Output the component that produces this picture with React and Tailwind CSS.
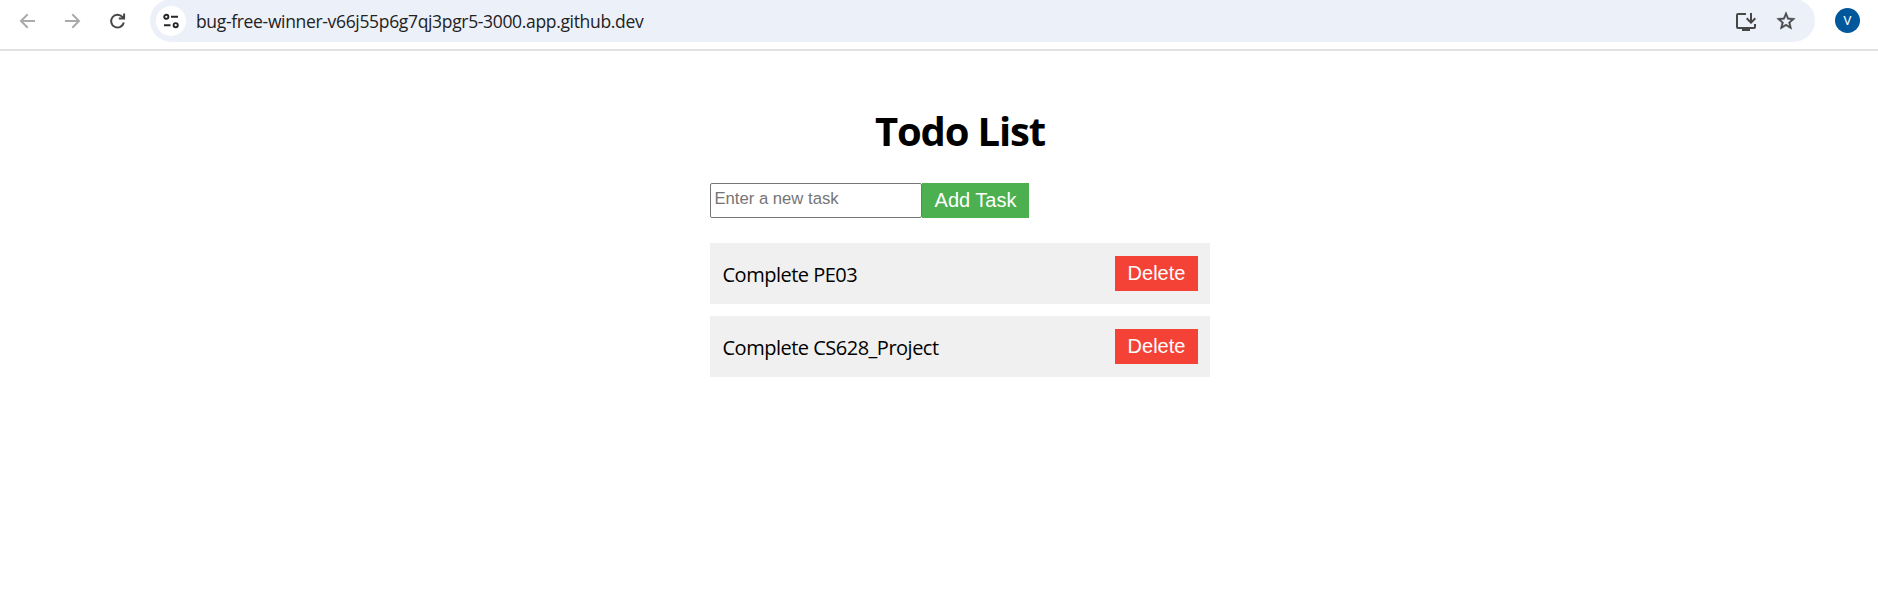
const TASKS = ["Complete PE03", "Complete CS628_Project"];

function Toolbar() {
  return (
    <header className="flex h-[51px] items-start border-b-2 border-[#e1e1e1] bg-white">
      <div className="flex h-[41px] w-[150px] shrink-0 items-center text-[#ababab]">
        <svg className="ml-[19px] size-[18px]" viewBox="0 0 18 18" fill="none" stroke="currentColor" strokeWidth="2">
          <path d="M16 9H2.5M8.7 2.3 2 9l6.700 6.700" />
        </svg>
        <svg className="ml-[27px] size-[18px]" viewBox="0 0 18 18" fill="none" stroke="currentColor" strokeWidth="2">
          <path d="M1 9h13.5M8.3 2.3 15 9l-6.700 6.700" />
        </svg>
        <svg className="ml-[27px] size-[18px]" viewBox="0 0 18 18" fill="none" stroke="#474747" strokeWidth="2">
          <path d="M14.800 10.500A6.400 6.400 0 1 1 13.400 4.900L15 6.200M15.100 1.500V6.600H9.800" />
        </svg>
      </div>
      <div className="-mt-px flex h-[43px] w-[1665px] shrink-0 items-center rounded-full bg-[#ecf0f9] pl-[6px] pr-[18px]">
        <span className="flex size-[30px] items-center justify-center rounded-full bg-white">
          <svg className="size-4" viewBox="0 0 16 16" fill="none" stroke="#262626" strokeWidth="1.9">
            <circle cx="3.3" cy="3.8" r="2.1" />
            <path d="M8 3.8h7M1 12.2h6.5" />
            <circle cx="12.7" cy="12.2" r="2.1" />
          </svg>
        </span>
        <span className="ml-[10px] whitespace-nowrap font-['Open_Sans',sans-serif] text-[17.5px] leading-6 tracking-[-0.335px] text-[#222]">
          bug-free-winner-v66j55p6g7qj3pgr5-3000.app.github.dev
        </span>
        <svg className="ml-auto mt-[2px] size-6" viewBox="0 0 24 24" fill="#474747">
          <path d="M20 17H4V5h8V3H4a2 2 0 0 0-2 2v12a2 2 0 0 0 2 2h4v2h8v-2h4a2 2 0 0 0 2-2v-3h-2z" />
          <path d="m17 14 5-5-1.410-1.410L18 10.170V3h-2v7.170l-2.590-2.580L12 9z" />
        </svg>
        <svg className="ml-[17px] mt-px size-[22px]" viewBox="0 0 24 24" fill="#474747" stroke="#474747" strokeWidth="0.5">
          <path d="m22 9.240-7.190-.620L12 2 9.190 8.630 2 9.240l5.460 4.730L5.820 21 12 17.270 18.180 21l-1.630-7.030zM12 15.400l-3.760 2.270 1-4.280-3.320-2.880 4.380-.380L12 6.100l1.710 4.040 4.380.380-3.320 2.880 1 4.280z" />
        </svg>
      </div>
      <span className="ml-5 mt-2 flex size-[25px] items-center justify-center rounded-full bg-[#01579b] font-['Roboto',sans-serif] text-[13px] text-white">
        V
      </span>
    </header>
  );
}

export default function App() {
  return (
    <div className="min-h-[610px] bg-white font-['Open_Sans',sans-serif] text-black">
      <Toolbar />
      <main className="ml-[710px] w-[500px] pt-[53px]">
        <h1 className="whitespace-nowrap text-center text-[40px] font-bold leading-[53px] tracking-[-1.15px]">Todo List</h1>
        <form className="mt-[26px] flex h-[35px] font-['Liberation_Sans',sans-serif]" onSubmit={(e) => e.preventDefault()}>
          <input
            className="w-[212px] rounded-[2px] border border-[#767676] bg-white px-[3.5px] pb-[2px] text-[16.67px] placeholder:text-[#757575]"
            placeholder="Enter a new task"
          />
          <button className="w-[107px] whitespace-nowrap bg-[#4caf50] pb-[2px] text-[20px] leading-none text-white">Add Task</button>
        </form>
        <ul className="mt-[25px] flex flex-col gap-3">
          {TASKS.map((task) => (
            <li key={task} className="flex h-[61px] items-center justify-between bg-[#f0f0f0] px-3">
              <span className="mt-[2px] whitespace-nowrap pl-[0.5px] text-[20px] leading-[27px] tracking-[-0.5px]">{task}</span>
              <button className="h-[35px] w-[83px] bg-[#f44336] pb-[2px] font-['Liberation_Sans',sans-serif] text-[20px] leading-none text-white">
                Delete
              </button>
            </li>
          ))}
        </ul>
      </main>
    </div>
  );
}
